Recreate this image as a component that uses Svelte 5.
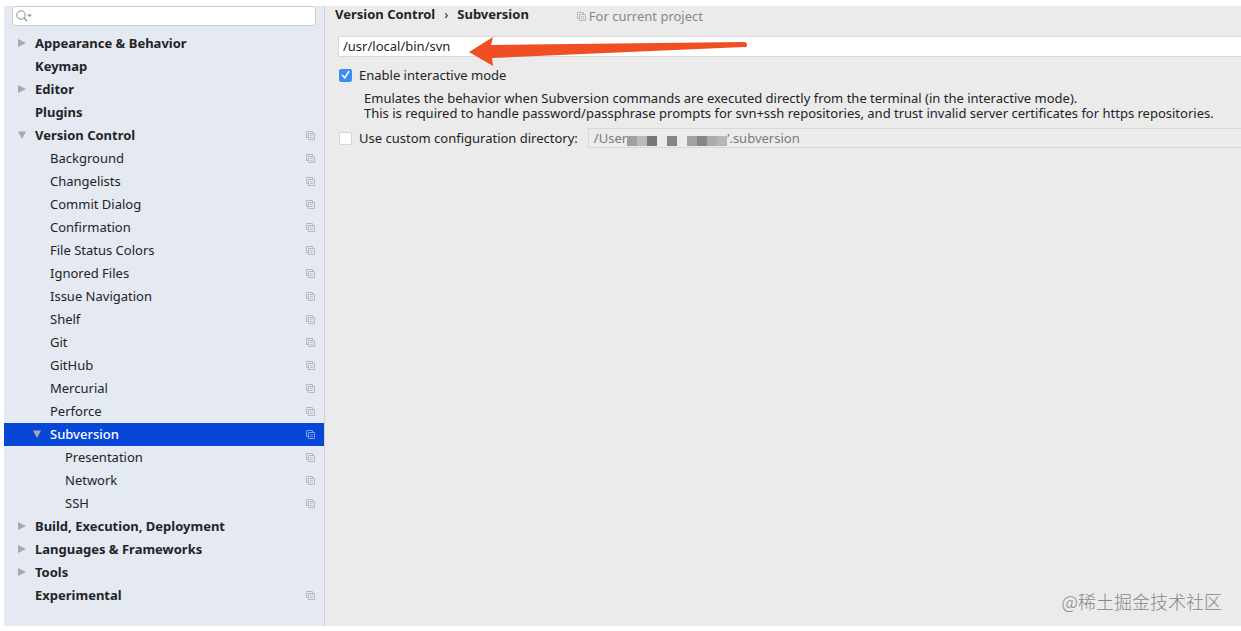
<script>
  const rows = [
    { label: 'Appearance & Behavior', level: 0, arrow: 'closed' },
    { label: 'Keymap', level: 0 },
    { label: 'Editor', level: 0, arrow: 'closed' },
    { label: 'Plugins', level: 0 },
    { label: 'Version Control', level: 0, arrow: 'open', project: true },
    { label: 'Background', level: 1, project: true },
    { label: 'Changelists', level: 1, project: true },
    { label: 'Commit Dialog', level: 1, project: true },
    { label: 'Confirmation', level: 1, project: true },
    { label: 'File Status Colors', level: 1, project: true },
    { label: 'Ignored Files', level: 1, project: true },
    { label: 'Issue Navigation', level: 1, project: true },
    { label: 'Shelf', level: 1, project: true },
    { label: 'Git', level: 1, project: true },
    { label: 'GitHub', level: 1, project: true },
    { label: 'Mercurial', level: 1, project: true },
    { label: 'Perforce', level: 1, project: true },
    { label: 'Subversion', level: 1, arrow: 'open', project: true },
    { label: 'Presentation', level: 2, project: true },
    { label: 'Network', level: 2, project: true },
    { label: 'SSH', level: 2, project: true },
    { label: 'Build, Execution, Deployment', level: 0, arrow: 'closed' },
    { label: 'Languages & Frameworks', level: 0, arrow: 'closed' },
    { label: 'Tools', level: 0, arrow: 'closed' },
    { label: 'Experimental', level: 0, project: true }
  ];
  const mosaic = ['#a0a0a0', '#bababa', '#777777', '', '#858585', '', '#a2a2a2', '#868686', '#aaaaaa', '#b6b6b6'];

  let selected = $state('Subversion');
  let path = $state('/usr/local/bin/svn');
  let interactive = $state(true);
  let custom = $state(false);
</script>

{#snippet copyIcon()}
  <svg class="copy" viewBox="0 0 9 9" width="9" height="9" aria-hidden="true">
    <path d="M2.5 6.5H.5v-6h6v2M2.5 2.5h6v6h-6z" fill="none" stroke="currentColor" />
    <path d="M4 4.600h3M4 6.500h3" fill="none" stroke="currentColor" stroke-width=".8" />
  </svg>
{/snippet}

<div class="window">
  <aside class="sidebar">
    <label class="search">
      <svg viewBox="0 0 16 12" width="16" height="12" aria-hidden="true">
        <circle cx="5" cy="5" r="4.200" fill="none" stroke="#8b8d90" />
        <path d="M8 8l3 3" stroke="#8b8d90" stroke-width="1.300" />
        <path d="M11 4.500h5L13.500 7z" fill="#8b8d90" />
      </svg>
      <input type="text" aria-label="Search settings" />
    </label>
    <nav class="tree">
      {#each rows as row (row.label)}
        <button
          class="row level{row.level}"
          class:selected={selected === row.label}
          onclick={() => (selected = row.label)}
        >
          <span class="toggle">
            {#if row.arrow}
              <svg viewBox="0 0 8 8" width="8" height="8" aria-hidden="true">
                <path d={row.arrow === 'open' ? 'M0 .5h8L4 8z' : 'M0 0v8l8-4z'} fill="currentColor" />
              </svg>
            {/if}
          </span>
          <span class="name">{row.label}</span>
          {#if row.project}{@render copyIcon()}{/if}
        </button>
      {/each}
    </nav>
  </aside>

  <main class="panel">
    <header class="heading">
      <h1><span>Version Control</span><span class="sep">›</span><span>Subversion</span></h1>
      <p class="scope">{@render copyIcon()}For current project</p>
    </header>

    <div class="executable">
      <input class="field" type="text" aria-label="Path to Subversion executable" bind:value={path} />
      <svg class="pointer" viewBox="0 0 280 32" width="280" height="32" aria-hidden="true">
        <path d="M0 16L24 1 22 9 275 6Q278 6 278 9T275 11L23 22 24 30Z" fill="#f04e23" />
      </svg>
    </div>

    <label class="check">
      <input type="checkbox" bind:checked={interactive} />
      Enable interactive mode
    </label>
    <div class="hint">
      <p>Emulates the behavior when Subversion commands are executed directly from the terminal (in the interactive mode).</p>
      <p>This is required to handle password/passphrase prompts for svn+ssh repositories, and trust invalid server certificates for https repositories.</p>
    </div>
    <div class="custom">
      <label class="check">
        <input type="checkbox" bind:checked={custom} />
        Use custom configuration directory:
      </label>
      <div class="directory">
        <span>/User</span>
        <span class="mosaic">
          {#each mosaic as color}<i style:background={color || null}></i>{/each}
        </span>
        <span>’.subversion</span>
      </div>
    </div>

    <footer>@稀土掘金技术社区</footer>
  </main>
</div>

<style>
  :global(body) {
    margin: 0;
    background: #fff;
  }
  .window,
  .window * {
    box-sizing: border-box;
  }
  .window {
    display: flex;
    min-height: 100vh;
    padding: 6px 0 5px 4px;
    font: 13px/16px 'Noto Sans', 'Lucida Grande', sans-serif;
    color: #222427;
  }
  input,
  button {
    font: inherit;
    color: inherit;
  }
  svg {
    display: block;
    flex: none;
  }

  .sidebar {
    flex: 0 0 321px;
    background: #e5e9f1;
    border-right: 1px solid #cbced4;
  }
  .search {
    display: flex;
    align-items: center;
    height: 20px;
    margin: 0 8px 6px;
    padding-left: 3px;
    background: #fff;
    border: 1px solid #c9ccd1;
    border-radius: 3px;
  }
  .search input {
    flex: 1;
    min-width: 0;
    border: 0;
    background: none;
    outline: none;
  }
  .tree {
    display: flex;
    flex-direction: column;
  }
  .row {
    display: flex;
    align-items: center;
    height: 23px;
    padding: 0 9px 1px 14px;
    border: 0;
    background: none;
    text-align: left;
  }
  .level0 {
    font-weight: 700;
  }
  .level1 {
    padding-left: 29px;
  }
  .level2 {
    padding-left: 44px;
  }
  .toggle {
    width: 17px;
    color: #a6a9ae;
  }
  .name {
    flex: 1;
  }
  .copy {
    color: #b4b8bd;
  }
  .selected {
    background: #0647d8;
    color: #fff;
    font-weight: 500;
  }
  .selected .copy {
    color: #7d9fe8;
  }

  .panel {
    flex: 1;
    min-width: 0;
    display: flex;
    flex-direction: column;
    background: #ebebeb;
    overflow: hidden;
  }
  .heading {
    display: flex;
    gap: 48px;
    padding-left: 10px;
    height: 30px;
  }
  h1 {
    display: flex;
    gap: 9px;
    margin: 0;
    font: inherit;
    font-weight: 700;
  }
  .sep {
    font-weight: 400;
  }
  .scope {
    display: flex;
    align-items: center;
    gap: 3px;
    height: 20px;
    margin: 0;
    color: #85878a;
  }
  .executable {
    position: relative;
    margin-left: 13px;
  }
  .field {
    display: block;
    width: 100%;
    height: 21px;
    padding: 0 4px 1px;
    border: 1px solid #d8d8d8;
    border-right: 0;
    background: #fff;
    outline: none;
  }
  .pointer {
    position: absolute;
    left: 131px;
    top: 0;
  }
  .check {
    display: flex;
    align-items: center;
    gap: 7px;
    height: 20px;
    padding-left: 14px;
  }
  .executable + .check {
    margin-top: 8px;
  }
  .check input {
    display: grid;
    place-items: center;
    appearance: none;
    width: 13px;
    height: 13px;
    margin: 0;
    border: 1px solid #d5d5d5;
    border-radius: 2px;
    background: #fff;
  }
  .check input:checked {
    border-color: #3b8df5;
    background: #3b8df5;
  }
  .check input:checked::after {
    content: '';
    width: 10px;
    height: 10px;
    background: #fff;
    clip-path: polygon(10% 55%, 22% 44%, 42% 66%, 78% 8%, 92% 16%, 44% 90%);
  }
  .hint {
    margin: 6px 0 7px;
    padding-left: 39px;
    line-height: 15px;
    white-space: nowrap;
  }
  .hint p {
    margin: 0;
  }
  .custom {
    display: flex;
    gap: 10px;
  }
  .directory {
    flex: 1;
    display: flex;
    align-items: center;
    height: 20px;
    padding-left: 5px;
    border: 1px solid #d8d8d8;
    border-right: 0;
    color: #7b7b7b;
  }
  .mosaic {
    display: flex;
    padding-top: 5px;
  }
  .mosaic i {
    width: 10px;
    height: 10px;
  }
  footer {
    margin: auto 19px 13px auto;
    font: 18px/24px 'Noto Sans CJK SC', sans-serif;
    font-weight: 300;
    color: #85878a;
  }
</style>
